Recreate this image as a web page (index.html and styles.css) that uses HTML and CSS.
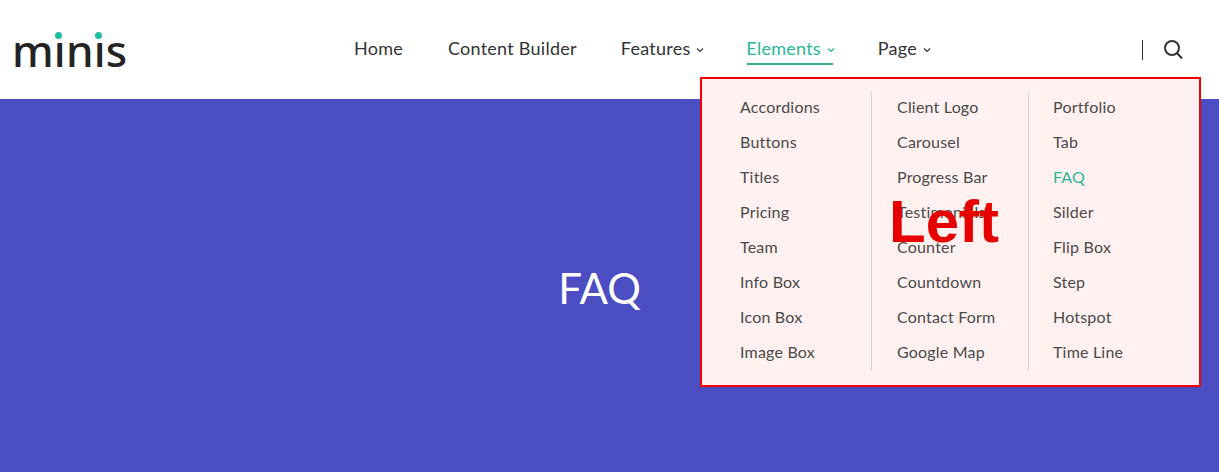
FILE: index.html
```html
<!DOCTYPE html>
<html lang="en">
<head>
  <meta charset="UTF-8">
  <meta name="viewport" content="width=device-width, initial-scale=1.0">
  <title>FAQ</title>
  <link rel="stylesheet" href="styles.css">
</head>
<body>
  <header class="site-header">
    <a class="logo" href="#">minis<span class="logo-dot dot-one"></span><span class="logo-dot dot-two"></span></a>

    <nav class="main-nav">
      <a class="nav-link" href="#">Home</a>
      <a class="nav-link" href="#">Content Builder</a>
      <a class="nav-link" href="#">Features
        <svg class="caret" viewBox="0 0 8 6"><path d="M1 1.5 4 4.5 7 1.5"/></svg>
      </a>
      <a class="nav-link active" href="#">Elements
        <svg class="caret" viewBox="0 0 8 6"><path d="M1 1.5 4 4.5 7 1.5"/></svg>
      </a>
      <a class="nav-link" href="#">Page
        <svg class="caret" viewBox="0 0 8 6"><path d="M1 1.5 4 4.5 7 1.5"/></svg>
      </a>
    </nav>

    <div class="header-tools">
      <span class="tools-line"></span>
      <svg class="search-icon" viewBox="0 0 20 20"><circle cx="8" cy="8" r="7"/><path d="M13 13 18 18.5"/></svg>
    </div>
  </header>

  <section class="banner">
    <h1>FAQ</h1>
  </section>

  <div class="dropdown">
    <ul class="drop-col">
      <li>Accordions</li>
      <li>Buttons</li>
      <li>Titles</li>
      <li>Pricing</li>
      <li>Team</li>
      <li>Info Box</li>
      <li>Icon Box</li>
      <li>Image Box</li>
    </ul>
    <ul class="drop-col">
      <li>Client Logo</li>
      <li>Carousel</li>
      <li>Progress Bar</li>
      <li>Testimonials</li>
      <li>Counter</li>
      <li>Countdown</li>
      <li>Contact Form</li>
      <li>Google Map</li>
    </ul>
    <ul class="drop-col">
      <li>Portfolio</li>
      <li>Tab</li>
      <li class="current">FAQ</li>
      <li>Silder</li>
      <li>Flip Box</li>
      <li>Step</li>
      <li>Hotspot</li>
      <li>Time Line</li>
    </ul>
    <span class="side-label">Left</span>
  </div>
</body>
</html>
```

FILE: styles.css
```css
/* General Styling */
body {
  font-family: 'Lato', 'Noto Sans', sans-serif;
  margin: 0;
  background: #4b4dc3;
  height: 472px;
  overflow: hidden;
}

a {
  text-decoration: none;
  color: inherit;
}

/* Header */
.site-header {
  display: flex;
  align-items: center;
  height: 99px;
  background: #ffffff;
  padding: 0 35px 0 12px;
  box-sizing: border-box;
}

.logo {
  position: relative;
  width: 342px;
  font-family: 'Noto Sans', sans-serif;
  font-size: 44px;
  font-weight: 500;
  line-height: 50px;
  letter-spacing: 0.2px;
  color: #232323;
}

.logo-dot {
  position: absolute;
  top: 7px;
  width: 7px;
  height: 7px;
  border-radius: 50%;
  background: #1fbf9f;
  box-shadow: 0 0 0 2px #ffffff;
}

.dot-one { left: 43px; }
.dot-two { left: 83px; }

.main-nav {
  display: flex;
  align-items: center;
  gap: 44px;
  flex: 1;
  margin-bottom: 4px;
}

.nav-link {
  display: block;
  font-size: 18px;
  line-height: 30px;
  letter-spacing: 0.25px;
  color: #333333;
  white-space: nowrap;
}

.nav-link:first-child {
  margin-right: 1px;
}

.nav-link.active {
  margin: 0 -1px 0 -3px;
  padding-left: 1px;
  color: #2ab795;
  box-shadow: 0 4px 0 -2px #3aae92;
}

.caret {
  width: 8px;
  height: 6px;
  margin-left: 1px;
  vertical-align: 2px;
  fill: none;
  stroke: currentColor;
  stroke-width: 1.2;
}

.header-tools {
  display: flex;
  align-items: center;
  gap: 21px;
}

.tools-line {
  width: 1px;
  height: 20px;
  background: #333333;
}

.search-icon {
  width: 20px;
  height: 20px;
  fill: none;
  stroke: #333333;
  stroke-width: 2;
}

/* Banner */
.banner {
  display: flex;
  justify-content: center;
  padding: 160px 20px 0 0;
}

.banner h1 {
  margin: 0;
  font-size: 42px;
  line-height: 58px;
  font-weight: 400;
  color: #ffffff;
}

/* Dropdown */
.dropdown {
  position: absolute;
  left: 700px;
  top: 77px;
  width: 497px;
  height: 296px;
  display: flex;
  padding-top: 10px;
  background: #fff1f0;
  border: 2px solid #f00000;
}

.drop-col {
  list-style: none;
  margin: 2px 0 0;
  padding: 0 0 0 25px;
  width: 157px;
  height: 280px;
  box-sizing: border-box;
  border-right: 1px solid #d8d2d2;
}

.drop-col:first-child {
  padding-left: 38px;
  width: 170px;
}

.drop-col:last-of-type {
  border-right: none;
  padding-left: 24px;
}

.drop-col li {
  font-size: 16px;
  line-height: 35px;
  letter-spacing: 0.2px;
  color: #4a4a4a;
  position: relative;
  top: -2px;
}

.drop-col li.current {
  color: #2ab795;
}

.side-label {
  position: absolute;
  left: 187px;
  top: 108px;
  font-family: 'Liberation Sans', sans-serif;
  font-size: 60px;
  font-weight: 700;
  line-height: 70px;
  color: #e60000;
}
```
